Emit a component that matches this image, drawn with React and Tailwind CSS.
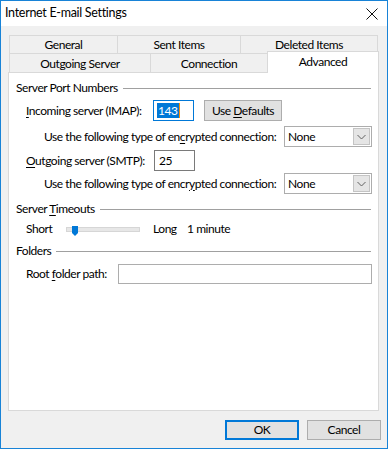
import React from 'react'

const U = ({ children }) => <span className="underline underline-offset-[2px] decoration-1">{children}</span>

function GroupHeader({ children, className = '' }) {
  return (
    <div className={`flex items-center h-[18px] pl-[7px] pr-[7px] ${className}`}>
      <span className="whitespace-nowrap">{children}</span>
      <div className="flex-1 h-px bg-[#a0a0a0] ml-[5px] mt-[1px]" />
    </div>
  )
}

function ComboBox() {
  return (
    <div className="shrink-0 w-[88px] h-[21px] border border-[#adadad] bg-white flex items-center justify-between pl-[3px] pr-[1px]">
      <span>None</span>
      <div className="w-[17px] h-[17px] bg-[#e5e5e5] border border-[#c4c4c4] flex items-center justify-center">
        <svg width="9" height="6" viewBox="0 0 9 6">
          <path d="M0.5 1 L4.5 5 L8.5 1" fill="none" stroke="#606060" strokeWidth="1" />
        </svg>
      </div>
    </div>
  )
}

export default function App() {
  return (
    <div className="w-[388px] h-[449px] border border-[#1883d7] bg-[#f0f0f0] flex flex-col text-[12px] tracking-[-0.45px] text-black font-['Lato',sans-serif] leading-none select-none whitespace-nowrap">
      {/* title bar */}
      <div className="h-[25px] bg-white flex items-center justify-between pl-[4px] pr-[9px]">
        <span className="text-[12.5px] tracking-[-0.3px]">Internet E-mail Settings</span>
        <svg width="12" height="12" viewBox="0 0 12 12">
          <path d="M0.5 0.5 L11.5 11.5 M11.5 0.5 L0.5 11.5" stroke="#111" strokeWidth="1" />
        </svg>
      </div>

      {/* tabs */}
      <div className="mt-[9px] ml-[8px] flex h-[18px] text-center">
        <div className="w-[108px] border-t border-l border-[#d9d9d9] flex items-center justify-center pt-[1px]">General</div>
        <div className="w-[123px] border-t border-l border-[#d9d9d9] flex items-center justify-center pt-[1px]">Sent Items</div>
        <div className="w-[138px] border-t border-l border-r border-[#d9d9d9] flex items-center justify-center pt-[1px]">Deleted Items</div>
      </div>
      <div className="ml-[8px] flex items-start h-[19px]">
        <div className="w-[141px] h-[19px] border-t border-l border-[#d9d9d9] flex items-center justify-center pt-[1px]">Outgoing Server</div>
        <div className="w-[117px] h-[19px] border-t border-l border-[#d9d9d9] flex items-center justify-center pt-[1px]">Connection</div>
        <div className="relative z-10 -mt-[2px] w-[112px] h-[22px] bg-white border-t border-l border-r border-[#d9d9d9] flex items-start justify-center pt-[4px]">Advanced</div>
      </div>

      {/* panel */}
      <div className="ml-[7px] w-[371px] h-[339px] bg-white border border-[#d9d9d9]">
        <GroupHeader className="mt-[6px]">Server Port Numbers</GroupHeader>

        <div className="mt-[3px] h-[21px] flex items-center pl-[17px]">
          <span className="shrink-0 w-[127px]"><U>I</U>ncoming server (IMAP):</span>
          <div className="shrink-0 w-[41px] h-[21px] border border-[#0078d7] bg-white flex items-center pl-[3px]">
            <span className="bg-[#0078d7] text-white h-[15px] flex items-center px-px">143</span>
            <span className="w-px h-[15px] bg-[#ff8c00]" />
          </div>
          <div className="shrink-0 ml-[10px] w-[78px] h-[21px] bg-[#e1e1e1] border border-[#adadad] flex items-center justify-center">
            <span>Use <U>D</U>efaults</span>
          </div>
        </div>

        <div className="mt-[5px] h-[21px] flex items-center pl-[35px]">
          <span className="shrink-0 w-[240px]">Use the following type of en<U>c</U>rypted connection:</span>
          <ComboBox />
        </div>

        <div className="mt-[3px] h-[21px] flex items-center pl-[17px]">
          <span className="shrink-0 w-[128px]"><U>O</U>utgoing server (SMTP):</span>
          <div className="shrink-0 w-[41px] h-[21px] border border-[#7a7a7a] bg-white flex items-center pl-[4px]">25</div>
        </div>

        <div className="mt-[2px] h-[21px] flex items-center pl-[35px]">
          <span className="shrink-0 w-[240px]">Use the following type of encr<U>y</U>pted connection:</span>
          <ComboBox />
        </div>

        <GroupHeader className="mt-[6px]">Server <U>T</U>imeouts</GroupHeader>

        <div className="mt-[1px] h-[20px] flex items-center pl-[17px]">
          <span className="shrink-0 w-[40px]">Short</span>
          <div className="shrink-0 relative w-[74px] h-[5px] bg-[#e7e7e7] border border-[#d6d6d6]">
            <svg className="absolute left-[5px] -top-[2px]" width="6" height="10" viewBox="0 0 6 10">
              <path d="M0 0 H6 V7 L3 10 L0 7 Z" fill="#0078d7" />
            </svg>
          </div>
          <span className="shrink-0 ml-[13px] w-[34px]">Long</span>
          <span>1 minute</span>
        </div>

        <GroupHeader className="mt-[3px]">Folders</GroupHeader>

        <div className="mt-[4px] h-[20px] flex items-center pl-[17px] pr-[6px]">
          <span className="shrink-0 w-[92px]">Root <U>f</U>older path:</span>
          <div className="flex-1 h-[20px] border border-[#adadad] bg-white" />
        </div>
      </div>

      {/* buttons */}
      <div className="mt-[9px] flex justify-end gap-[8px] pr-[6px]">
        <div className="w-[74px] h-[20px] bg-[#e1e1e1] border-2 border-[#0078d7] flex items-center justify-center">OK</div>
        <div className="w-[74px] h-[20px] bg-[#e1e1e1] border border-[#adadad] flex items-center justify-center">Cancel</div>
      </div>
    </div>
  )
}
